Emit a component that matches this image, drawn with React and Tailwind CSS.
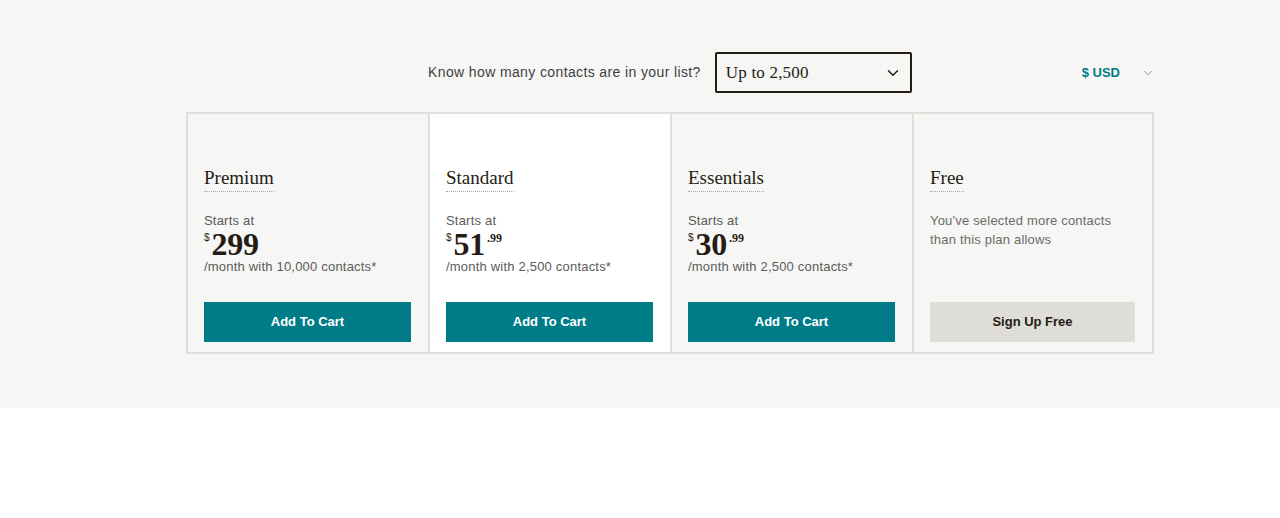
import { ChevronDown } from "lucide-react";

const plans = [
  { name: "Premium", dollars: "299", cents: "", note: "/month with 10,000 contacts*", cta: "Add To Cart" },
  { name: "Standard", dollars: "51", cents: ".99", note: "/month with 2,500 contacts*", cta: "Add To Cart", highlight: true },
  { name: "Essentials", dollars: "30", cents: ".99", note: "/month with 2,500 contacts*", cta: "Add To Cart" },
  { name: "Free", free: true, cta: "Sign Up Free" },
];

const serif = { fontFamily: '"Liberation Serif", "DejaVu Serif", serif' };

function PlanCard({ plan, last }) {
  return (
    <div
      className={`flex flex-col border-y-2 border-l-2 border-[#e0dfdb] pl-[16px] pr-[17px] pt-[52px] pb-[10px] ${
        last ? "border-r-2" : ""
      } ${plan.highlight ? "bg-white" : "bg-[#f6f6f4]"}`}
    >
      <div>
        <span
          className="inline-block border-b border-dotted border-[#a9a9a6] pb-[1px] text-[19px] leading-[24px] text-[#241c15]"
          style={serif}
        >
          {plan.name}
        </span>
      </div>
      {plan.free ? (
        <p className="mt-[19px] text-[13px] leading-[19px] tracking-[0.2px] text-[#6b6b6b]">
          You've selected more contacts
          <br />
          than this plan allows
        </p>
      ) : (
        <div className="mt-[20px]">
          <p className="text-[13px] leading-[18px] tracking-[0.2px] text-[#5b5b5b]">Starts at</p>
          <div className="flex items-start leading-none text-[#241c15]">
            <span className="mt-[3px] mr-[2px] text-[10px]">$</span>
            <span className="text-[32px] font-bold leading-[28px] tracking-[-0.3px]" style={serif}>
              {plan.dollars}
            </span>
            {plan.cents && (
              <span className="mt-[2px] ml-[2px] text-[12px] font-bold" style={serif}>
                {plan.cents}
              </span>
            )}
          </div>
          <p className="text-[13px] leading-[18px] tracking-[0.2px] text-[#5b5b5b]">{plan.note}</p>
        </div>
      )}
      <button
        type="button"
        className={`mt-auto h-[40px] w-full text-[13px] font-bold ${
          plan.free ? "bg-[#dfddd7] text-[#241c15]" : "bg-[#007c89] text-white"
        }`}
      >
        {plan.cta}
      </button>
    </div>
  );
}

export default function App() {
  return (
    <div className="min-h-[518px] bg-white" style={{ fontFamily: '"Liberation Sans", Arial, sans-serif' }}>
      <section className="bg-[#f6f6f4] pt-[52px] pb-[54px]">
        <div className="ml-[186px] w-[968px]">
          <div className="flex h-[41px] items-center">
            <span className="ml-[242px] text-[14px] tracking-[0.38px] text-[#3f3f3f]">
              Know how many contacts are in your list?
            </span>
            <div className="ml-[14px] flex h-[41px] w-[197px] items-center justify-between rounded-[2px] border-2 border-[#241c15] bg-[#f6f6f4] pl-[9px] pr-[8px]">
              <span className="text-[17px] tracking-[0.2px] text-[#241c15]" style={serif}>
                Up to 2,500
              </span>
              <ChevronDown size={18} strokeWidth={2} className="text-[#241c15]" />
            </div>
            <div className="ml-auto flex items-center">
              <span className="text-[13px] font-bold text-[#007c89]">$ USD</span>
              <ChevronDown size={14} strokeWidth={1.5} className="ml-[21px] mr-[-1px] text-[#8a8a8a]" />
            </div>
          </div>
          <div className="mt-[19px] grid h-[242px] grid-cols-4">
            {plans.map((plan, i) => (
              <PlanCard key={plan.name} plan={plan} last={i === plans.length - 1} />
            ))}
          </div>
        </div>
      </section>
    </div>
  );
}
